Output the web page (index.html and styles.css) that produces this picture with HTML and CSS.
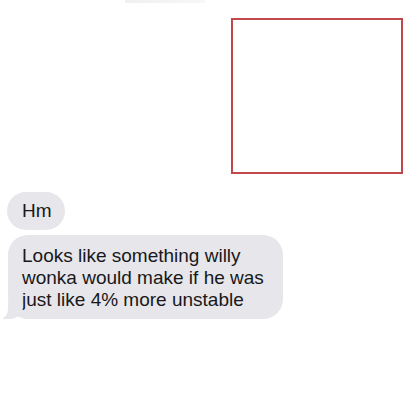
FILE: index.html
```html
<!DOCTYPE html>
<html lang="en">
<head>
    <meta charset="UTF-8">
    <meta name="viewport" content="width=device-width, initial-scale=1.0">
    <title>Messages</title>
    <link rel="stylesheet" href="styles.css">
</head>
<body>
    <div class="screen">
        <div class="top-strip"></div>

        <div class="media-row">
            <div class="media-frame"></div>
        </div>

        <div class="thread">
            <div class="bubble">Hm</div>
            <div class="bubble bubble-last">
                Looks like something willy<br>
                wonka would make if he was<br>
                just like 4% more unstable
            </div>
        </div>
    </div>
</body>
</html>
```
FILE: styles.css
```css
/* Base */
* {
    margin: 0;
    padding: 0;
    box-sizing: border-box;
}

body {
    background: #ffffff;
    font-family: 'Liberation Sans', Arial, sans-serif;
    color: #18181a;
}

.screen {
    width: 418px;
    height: 400px;
    overflow: hidden;
}

/* Faint leftover at the top edge */
.top-strip {
    width: 80px;
    height: 3px;
    margin-left: 125px;
    background: linear-gradient(90deg, #f0f0f2 0%, #f7f7f8 100%);
}

/* Red frame */
.media-row {
    display: flex;
    justify-content: flex-end;
    padding: 15px 15px 0 0;
}

.media-frame {
    width: 172px;
    height: 156px;
    border: 2px solid #c2474a;
}

/* Messages */
.thread {
    display: flex;
    flex-direction: column;
    align-items: flex-start;
    gap: 5px;
    padding: 18px 0 0 7px;
}

.bubble {
    position: relative;
    background: #e6e6eb;
    border-radius: 19px;
    font-size: 19px;
    line-height: 22px;
    padding: 8px 13px 8px 15px;
}

.bubble-last {
    margin-left: 1px;
    width: 275px;
    padding: 10px 10px 8px 14px;
    border-radius: 20px;
}

/* Tail */
.bubble-last::before {
    content: "";
    position: absolute;
    left: -5px;
    bottom: 0;
    width: 20px;
    height: 16px;
    background: #e6e6eb;
    border-bottom-right-radius: 14px 12px;
}

.bubble-last::after {
    content: "";
    position: absolute;
    left: -10px;
    bottom: 0;
    width: 10px;
    height: 16px;
    background: #ffffff;
    border-bottom-right-radius: 8px 10px;
}
```
